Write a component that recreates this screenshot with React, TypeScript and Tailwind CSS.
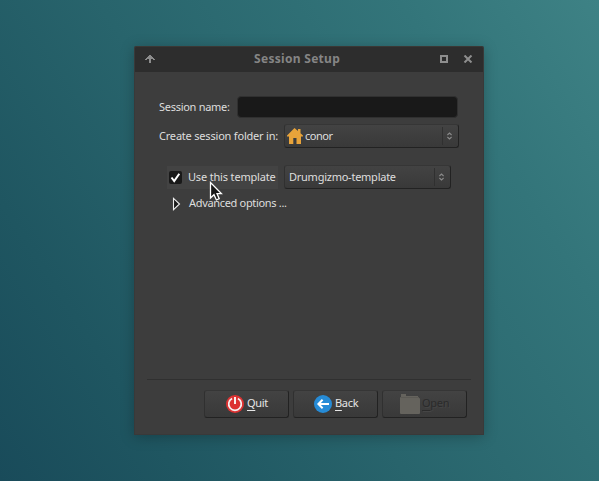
import React from "react";

const bevel =
  "rounded-[3px] border border-t-[#363636] border-l-[#303030] border-r-[#222222] border-b-[#222222] bg-linear-to-b from-[#434343] to-[#393939]";

function Spinner() {
  return (
    <span className="flex h-[18px] w-[16px] items-center border-l border-[#303030] pl-[2.5px]">
      <svg width="7" height="8" viewBox="0 0 7 8" fill="none" stroke="#8a8a8a" strokeWidth="1.1">
        <path d="M1.4 3 L3.5 1 L5.6 3" />
        <path d="M1.4 5 L3.5 7 L5.6 5" />
      </svg>
    </span>
  );
}

function TitleBar() {
  return (
    <header className="flex h-[26px] items-center rounded-t-[2px] border-t border-[#3a3835] bg-[#2d2d2d] pr-[10px] pb-[2px] pl-[10px]">
      <svg width="10" height="8" viewBox="0 0 10 8" shapeRendering="crispEdges" fill="#8c8c8c">
        <path d="M4 0h2v1h1v1h1v1h1v1h1v1H8V4H6v4H4V4H2v1H0V4h1V3h1V2h1V1h1z" />
      </svg>
      <h1 className="ml-[99px] w-[90px] whitespace-nowrap text-[12px] leading-[16px] font-bold tracking-[0.3px] text-[#858585]">
        Session Setup
      </h1>
      <span className="ml-auto h-[8px] w-[8px] border-2 border-[#8e8e8e]" />
      <svg className="ml-[15px]" width="10" height="8" viewBox="0 0 10 8" stroke="#8e8e8e" strokeWidth="2">
        <path d="M1.5 0.5 L8.5 7.5 M8.5 0.5 L1.5 7.5" />
      </svg>
    </header>
  );
}

function HomeIcon() {
  return (
    <svg width="16" height="16" viewBox="0 0 16 16" fill="#e8a33a">
      <path d="M7.5 0 L11 3 V1 H13.5 V5.2 L16 7.5 V8.5 H14 V16 H9.5 V10 H6.3 V16 H2 V8.5 H0 V7.5 Z" />
    </svg>
  );
}

function QuitIcon() {
  return (
    <svg width="18" height="18" viewBox="0 0 18 18" fill="none" stroke="#f6f0f0">
      <circle cx="9" cy="9" r="9" fill="#dc3232" stroke="none" />
      <path d="M6.1 3.5 A6.3 6.3 0 1 0 11.9 3.5" strokeWidth="1.7" />
      <path d="M9 2 V9" strokeWidth="2" />
    </svg>
  );
}

function BackIcon() {
  return (
    <svg width="18" height="18" viewBox="0 0 18 18" fill="none" stroke="#ffffff" strokeWidth="2">
      <circle cx="9" cy="9" r="9" fill="#268bd6" stroke="none" />
      <path d="M4.5 9 H15 M8.6 4.8 L4.4 9 L8.6 13.2" />
    </svg>
  );
}

function FolderIcon() {
  return (
    <svg width="20" height="20" viewBox="0 0 20 20" fill="#65635d">
      <path d="M1 0 H6 V2 H18 V4 H19 Q20 4 20 5 V19 Q20 20 19 20 H1 Q0 20 0 19 V4 Q0 3 1 3 Z" />
      <path d="M1 3.5 H19" stroke="#5c5a55" />
    </svg>
  );
}

function Button({ icon, label, pad, disabled }: { icon: React.ReactNode; label: string; pad: string; disabled?: boolean }) {
  return (
    <button
      disabled={disabled}
      className={`${bevel} ${pad} flex h-[28px] w-[85px] items-center text-[11px] ${
        disabled ? "text-[#2b2b2b] [text-shadow:1px_1px_0_#454545]" : "text-[#e6e6e6]"
      }`}
    >
      {icon}
      <span className="-mt-[2px] leading-[16px] tracking-[-0.3px]">
        <span className="underline underline-offset-[3px] [text-decoration-skip-ink:none]">{label[0]}</span>
        {label.slice(1)}
      </span>
    </button>
  );
}

export default function App() {
  return (
    <div className="relative h-[481px] w-[599px] overflow-hidden bg-[linear-gradient(57deg,#194b5a_0%,#1f5661_20%,#28646c_45%,#33757a_78%,#3e8285_100%)] pt-[46px] pl-[134px] font-['Noto_Sans',sans-serif] text-[11px] leading-[16px] text-[#dedede]">
      <main className="flex h-[389px] w-[350px] flex-col rounded-t-[2px] border-x border-b border-[#393939] bg-[#3d3d3d] shadow-[0_2px_14px_rgba(0,0,0,0.25)]">
        <TitleBar />
        <section className="flex flex-col pt-[24px] pl-[24px]">
          <div className="flex h-[22px] items-center">
            <label htmlFor="name" className="w-[78px] whitespace-nowrap tracking-[-0.28px]">Session name:</label>
            <input id="name" className="h-[22px] w-[221px] rounded-[4px] border border-[#303030] bg-[#191919] px-2 outline-none" />
          </div>
          <div className="mt-[6px] flex h-[24px] items-center">
            <span className="w-[125px] whitespace-nowrap tracking-[-0.2px]">Create session folder in:</span>
            <div className={`${bevel} flex h-[24px] w-[175px] items-center pl-[2px]`}>
              <HomeIcon />
              <span className="ml-[2px] flex-1 tracking-[-0.5px]">conor</span>
              <Spinner />
            </div>
          </div>
          <div className="mt-[17px] flex h-[24px] items-center pl-[8px]">
            <div className="flex h-[23px] w-[111px] items-center bg-[#434343] pl-[2px]">
              <span className="flex h-[13px] w-[13px] items-center justify-center rounded-[2px] bg-[#191919]">
                <svg width="11" height="11" viewBox="0 0 11 11" fill="none" stroke="#ffffff" strokeWidth="2">
                  <path d="M1.5 5.5 L4.2 9 L9.3 1.7" />
                </svg>
              </span>
              <span className="ml-[6px] whitespace-nowrap tracking-[-0.17px]">Use this template</span>
            </div>
            <div className={`${bevel} ml-[6px] flex h-[24px] w-[167px] items-center pl-[4px]`}>
              <span className="flex-1 whitespace-nowrap tracking-[-0.25px]">Drumgizmo-template</span>
              <Spinner />
            </div>
          </div>
          <div className="mt-[6px] flex h-[16px] items-center pl-[13px]">
            <svg className="mt-[2px]" width="9" height="14" viewBox="0 0 9 14" fill="#1b1b1b" stroke="#eeeeee" strokeWidth="1.1">
              <path d="M1.5 1.3 L7.5 7 L1.5 12.7 Z" />
            </svg>
            <span className="ml-[8px] whitespace-nowrap tracking-[-0.32px]">Advanced options ...</span>
          </div>
        </section>
        <footer className="mx-[12px] mt-auto flex h-[55px] gap-[4px] border-t border-[#303030] pt-[10px] pl-[57px]">
          <Button icon={<QuitIcon />} label="Quit" pad="gap-[3px] pl-[21px]" />
          <Button icon={<BackIcon />} label="Back" pad="gap-[3px] pl-[20px]" />
          <Button icon={<FolderIcon />} label="Open" pad="gap-[2px] pl-[17px]" disabled />
        </footer>
      </main>
      <svg className="absolute top-[181px] left-[209px]" width="15" height="22" viewBox="0 0 15 22">
        <path d="M1.5 1.5 V17 L5 13.7 L7.4 19 L10.2 17.7 L8 12.6 H12.4 Z" fill="#171717" stroke="#ffffff" strokeWidth="1.3" />
      </svg>
    </div>
  );
}
